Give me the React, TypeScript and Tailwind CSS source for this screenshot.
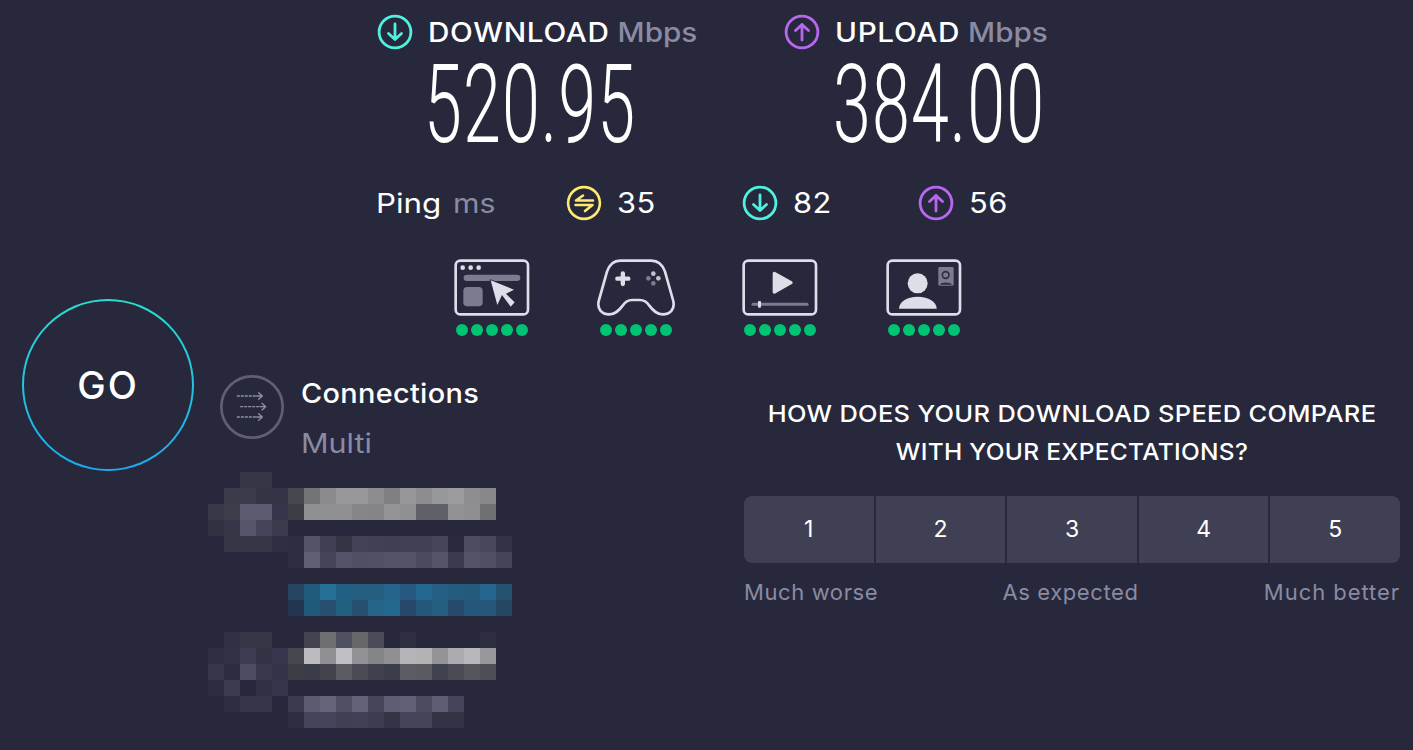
import React from "react";

const L = "#dcdee8";
const G = "#7b7c8e";

function ArrowCircle({ up, color }: { up?: boolean; color: string }) {
  return (
    <svg width="36" height="36" viewBox="0 0 36 36" fill="none" stroke={color} strokeWidth="2.8" strokeLinecap="round" strokeLinejoin="round" className="shrink-0">
      <circle cx="18" cy="18" r="15.9" />
      {up ? <path d="M18 26V10.5M11.5 16.5L18 10.5L24.5 16.5" /> : <path d="M18 10V25.5M11.5 19.5L18 25.5L24.5 19.5" />}
    </svg>
  );
}

function PingIcon() {
  return (
    <svg width="36" height="36" viewBox="0 0 36 36" fill="none" stroke="#fdea6e" strokeWidth="2.6" strokeLinecap="round" strokeLinejoin="round" className="shrink-0">
      <circle cx="18" cy="18" r="15.9" />
      <path d="M27 15.5H10L17 10.5M9.5 20H26.5L19 26" />
    </svg>
  );
}

function BrowserIcon() {
  return (
    <svg width="80" height="60" viewBox="36 39 240 180" fill="none">
      <rect x="47" y="47" width="217" height="161" rx="14" stroke={L} strokeWidth="8" />
      <circle cx="68" cy="68" r="7" fill={L} />
      <circle cx="92" cy="68" r="7" fill={L} />
      <circle cx="116" cy="68" r="7" fill={L} />
      <rect x="71" y="89" width="170" height="19" rx="9.5" fill={G} />
      <rect x="70" y="126" width="58" height="58" rx="12" fill={G} />
      <path d="M152 106L172 180L186 150L212 185L224 172L198 146L222 134Z" fill={L} stroke="#27283b" strokeWidth="6" strokeLinejoin="round" paintOrder="stroke" />
    </svg>
  );
}

function GameIcon() {
  return (
    <svg width="80" height="60" viewBox="468 39 240 180" fill="none">
      <path d="M540 47H634C655 47 668 60 675 80L699 165C707 192 690 208 668 208C650 208 640 198 628 182C620 170 612 165 600 165H576C564 165 556 170 548 182C536 198 526 208 508 208C486 208 469 192 477 165L501 80C508 60 521 47 540 47Z" stroke={L} strokeWidth="8" strokeLinejoin="round" />
      <path d="M532 101H565M548.500 85V117" stroke={L} strokeWidth="13" strokeLinecap="round" />
      <circle cx="640" cy="86" r="7" fill="#c0c1cd" />
      <circle cx="655" cy="100" r="7" fill="#c0c1cd" />
      <circle cx="640" cy="115" r="7" fill={G} />
      <circle cx="625" cy="100" r="7" fill={G} />
    </svg>
  );
}

function VideoIcon() {
  return (
    <svg width="80" height="60" viewBox="45 39 240 180" fill="none">
      <rect x="56" y="47" width="217" height="161" rx="14" stroke={L} strokeWidth="8" />
      <path d="M148 85L198 113L148 141Z" fill={L} stroke={L} strokeWidth="10" strokeLinejoin="round" />
      <path d="M84 178H246" stroke={G} strokeWidth="9" strokeLinecap="round" />
      <rect x="99" y="168" width="9" height="20" rx="3" fill={L} />
    </svg>
  );
}

function ChatIcon() {
  return (
    <svg width="80" height="60" viewBox="477 39 240 180" fill="none">
      <rect x="488" y="47" width="217" height="161" rx="14" stroke={L} strokeWidth="8" />
      <circle cx="578" cy="115" r="30" fill={L} />
      <path d="M522 191C522 170 545 155 578 155C611 155 635 170 635 191Z" fill={L} />
      <rect x="640" y="66" width="46" height="56" rx="4" fill={G} />
      <circle cx="662" cy="90" r="10" stroke="#2d2e40" strokeWidth="5" />
      <path d="M645 119C647 110 677 110 681 119Z" fill="#2d2e40" />
    </svg>
  );
}

function ConnIcon() {
  return (
    <svg width="64" height="64" viewBox="60 30 192 192" fill="none" className="shrink-0">
      <circle cx="156" cy="126" r="92" stroke="#5f6073" strokeWidth="8" />
      <g stroke="#8f90a6" strokeWidth="4" strokeLinecap="round" strokeLinejoin="round">
        <path d="M112 93H170" strokeDasharray="6 6" />
        <path d="M176 83L187 93L176 103M170 93H186" />
        <path d="M122 125H180" strokeDasharray="6 6" />
        <path d="M186 115L197 125L186 135M180 125H196" />
        <path d="M112 156H170" strokeDasharray="6 6" />
        <path d="M176 146L187 156L176 166M170 156H186" />
      </g>
    </svg>
  );
}

const MOSAIC: [number, number, string][] = ([
  [472, "..#353645 #353645"],
  [488, ".#3a3a4a #393a4a #333444 #333445 #47474f #737475 #8b8b8f #98989c #98989c #8c8c90 #808084 #97979b #8d8d90 #97989c #9c9ca0 #8e8e92 #88888c"],
  [504, "#373848 #3d3d4c #5b5c6f #5b5c6f #34354a #3c3d46 #8f9092 #8f9093 #909093 #868689 #858588 #949497 #8f9092 #606168 #606168 #919195 #8f8f93 #6f7073"],
  [520, "#303141 #343546 #55566a #444558 #393a4c"],
  [536, ".#343545 #353646 #353646 #2e2f41 #2d2e40 #525366 #3e3f52 #333444 #424356 #404155 #3f4053 #404154 #404155 #454659 #292a3d #4c4d60 #474859 #323345"],
  [552, ".....#2d2e40 #5f6072 #444556 #525366 #4f5063 #505164 #525366 #525366 #4a4b5e #545568 #3a3b4c #525366 #4f5063 #434456"],
  [584, ".....#264560 #205a7c #266f97 #225f84 #235d80 #235d80 #24648a #26597f #25688f #255f85 #245c80 #245b7d #256690 #25536f"],
  [600, ".....#233550 #20597a #264f6f #20617f #26506f #26648a #24688f #27486a #245679 #245f82 #264a6c #24557a #265778 #264764"],
  [632, ".#2f3041 #343545 #343545 . . #434450 #6d6e72 #505160 #66676b #4b4c5a . #2e2f40 . . . . #2d2e3f"],
  [648, "#2e2f40 #313243 #3c3d50 #323344 #36374e #47474f #bcbcc0 #909094 #c0c0c4 #919195 #848589 #909094 #b5b5b9 #b3b3b6 #949498 #acacb0 #b8b8bc #98989c"],
  [664, "#363748 #2c2d3f #4c4d62 #38394b #33344a #3d3d47 #3a3b48 #43434e #5b5c62 #4a4b55 #3f404e #3c3d4b #5b5c64 #595a60 #41424f #4a4b55 #55565c #4d4e56"],
  [680, "#2c2d3e #3b3c4e . #2f3041 #34354a"],
  [696, ".#2d2e40 #343546 #343546 . #3a3b4d #5b5c70 #646579 #4f5064 #626378 #45465a #5c5d72 #606177 #4b4c60 #5d5e73 #434459"],
  [712, ".....#2d2e40 #44455a #44455a #3f4053 #404155 #3c3d50 #333446 #434458 #434458 #323345 #323345"],
] as [number, string][]).flatMap(([y, s]) => {
  const out: [number, number, string][] = [];
  let col = 0;
  for (const tok of s.trim().split(/\s+/)) {
    let t = tok;
    while (t.startsWith(".")) {
      col++;
      t = t.slice(1);
    }
    if (t) {
      out.push([col, y, t]);
      col++;
    }
  }
  return out;
});

function Mosaic() {
  return (
    <svg width="304" height="256" viewBox="208 472 304 256" className="block" shapeRendering="crispEdges">
      {MOSAIC.map(([c, y, f], i) => (
        <rect key={i} x={208 + c * 16} y={y} width="16" height="16" fill={f} />
      ))}
    </svg>
  );
}

function Dots() {
  return (
    <div className="flex gap-[3px] mt-[6px]">
      {[0, 1, 2, 3, 4].map((i) => (
        <span key={i} className="size-[12px] rounded-full bg-[#00c373]" />
      ))}
    </div>
  );
}

function Quality({ children }: { children: React.ReactNode }) {
  return (
    <div className="flex flex-col items-center w-[80px]">
      {children}
      <Dots />
    </div>
  );
}

function Speed({ icon, label, value, w, pad }: { icon: React.ReactNode; label: string; value: string; w: string; pad: string }) {
  return (
    <div className={w}>
      <div className="flex items-center gap-[15px] h-[36px]">
        {icon}
        <div className="text-[27px] font-medium whitespace-nowrap leading-none origin-left scale-x-[1.1]">
          <span className="text-white tracking-[0.6px]">{label}</span>{" "}
          <span className="text-[#8a8ba3]">Mbps</span>
        </div>
      </div>
      <div className={`${pad} h-[110px]`}>
        <div className="font-['Roboto',sans-serif] font-light text-[110px] leading-[110px] tracking-[1.8px] text-white origin-left scale-x-[0.62] whitespace-nowrap w-max">
          {value}
        </div>
      </div>
    </div>
  );
}

function Stat({ icon, value, w }: { icon: React.ReactNode; value: string; w: string }) {
  return (
    <div className={`flex items-center gap-[15px] ${w}`}>
      {icon}
      <span className="text-white text-[28px] tracking-[0.5px] leading-none origin-left scale-x-[1.1]">{value}</span>
    </div>
  );
}

export default function App() {
  return (
    <div className="flex w-[1413px] h-[750px] overflow-hidden bg-[#27283b] font-['Inter',sans-serif]">
      <div className="w-[208px] shrink-0 pl-[22px] pt-[299px]">
        <div className="size-[172px] rounded-full p-[2px] bg-gradient-to-b from-[#2adfd0] to-[#1ea9ef]">
          <div className="size-full rounded-full bg-[#27283b] flex items-center justify-center text-white text-[38px] font-medium tracking-[2px]">
            GO
          </div>
        </div>
      </div>
      <div className="flex-1 flex flex-col min-w-0">
        <div className="flex pl-[169px] pt-[14px]">
          <Speed w="w-[407px]" pad="pl-[47px]" icon={<ArrowCircle color="#4ff0e0" />} label="DOWNLOAD" value="520.95" />
          <Speed w="w-[300px]" pad="pl-[49px]" icon={<ArrowCircle up color="#b868f0" />} label="UPLOAD" value="384.00" />
        </div>
        <div className="flex items-center pl-[168px] mt-[25px] h-[36px]">
          <div className="w-[190px] flex items-baseline text-[27px] leading-none">
            <span className="text-white w-[77px] origin-left scale-x-[1.16]">Ping</span>
            <span className="text-[#8a8ba3] origin-left scale-x-[1.12]">ms</span>
          </div>
          <Stat w="w-[176px]" icon={<PingIcon />} value="35" />
          <Stat w="w-[176px]" icon={<ArrowCircle color="#4ff0e0" />} value="82" />
          <Stat w="w-[120px]" icon={<ArrowCircle up color="#b868f0" />} value="56" />
        </div>
        <div className="flex gap-[64px] pl-[244px] mt-[37px]">
          <Quality><BrowserIcon /></Quality>
          <Quality><GameIcon /></Quality>
          <Quality><VideoIcon /></Quality>
          <Quality><ChatIcon /></Quality>
        </div>
        <div className="flex">
          <div className="w-[536px] shrink-0 flex flex-col pt-[39px]">
            <div className="flex gap-[17px] pl-[12px] h-[97px]">
              <ConnIcon />
              <div className="pt-[4px]">
                <div className="text-white text-[27px] font-medium leading-[30px] tracking-[0.3px] origin-left scale-x-[1.07] whitespace-nowrap">Connections</div>
                <div className="text-[#8a8ba3] text-[27px] leading-[30px] mt-[20px] origin-left scale-x-[1.13]">Multi</div>
              </div>
            </div>
            <Mosaic />
          </div>
          <div className="w-[656px] shrink-0 flex flex-col pt-[59px]">
            <div className="text-white text-[23px] font-medium leading-[38px] text-center ml-[12px] w-[632px] tracking-[0.3px]">
              <div className="scale-x-[1.105]">HOW DOES YOUR DOWNLOAD SPEED COMPARE</div>
              <div className="scale-x-[1.063]">WITH YOUR EXPECTATIONS?</div>
            </div>
            <div className="flex gap-[2px] mt-[25px] rounded-lg overflow-hidden">
              {[1, 2, 3, 4, 5].map((n) => (
                <div key={n} className="flex-1 h-[67px] bg-[#3f4054] flex items-center justify-center text-white text-[23px]">
                  {n}
                </div>
              ))}
            </div>
            <div className="flex justify-between mt-[16px] text-[#8a8ba3] text-[22px] leading-[26px] tracking-[0.6px]">
              <span>Much worse</span>
              <span className="mr-[1px]">As expected</span>
              <span className="tracking-[0.95px]">Much better</span>
            </div>
          </div>
        </div>
      </div>
    </div>
  );
}
